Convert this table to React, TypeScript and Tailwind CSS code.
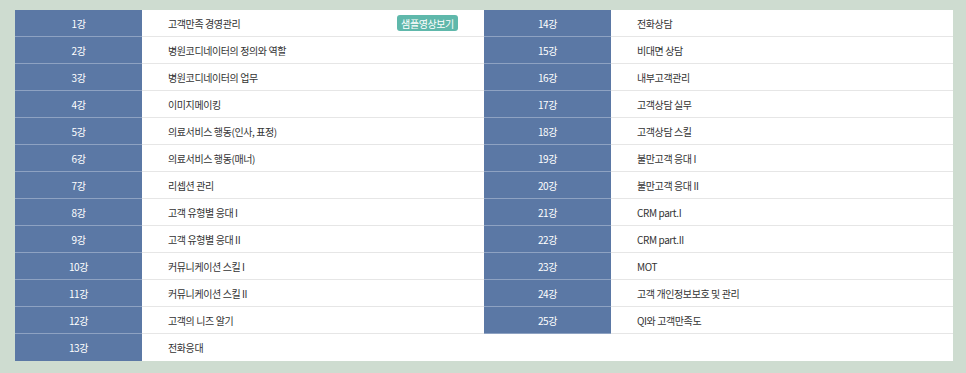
const left = [
  "고객만족 경영관리",
  "병원코디네이터의 정의와 역할",
  "병원코디네이터의 업무",
  "이미지메이킹",
  "의료서비스 행동(인사, 표정)",
  "의료서비스 행동(매너)",
  "리셉션 관리",
  "고객 유형별 응대 I",
  "고객 유형별 응대 II",
  "커뮤니케이션 스킬 I",
  "커뮤니케이션 스킬 II",
  "고객의 니즈 알기",
  "전화응대",
];

const right = [
  "전화상담",
  "비대면 상담",
  "내부고객관리",
  "고객상담 실무",
  "고객상담 스킬",
  "불만고객 응대 I",
  "불만고객 응대 II",
  "CRM part.I",
  "CRM part.II",
  "MOT",
  "고객 개인정보보호 및 관리",
  "QI와 고객만족도",
];

export default function App() {
  return (
    <div
      className="w-[966px] h-[373px] bg-[#cedcd0] pt-[10px] pl-[15px]"
      style={{ fontFamily: '"Noto Sans CJK KR", "Noto Sans", sans-serif' }}
    >
      <div className="w-[938px] flex flex-col bg-white text-[10px] tracking-[-0.4px]">
        {left.map((title, i) => {
          const r = right[i];
          const last = i === left.length - 1;
          return (
            <div key={i} className="flex h-[27px]">
              <div
                className={`w-[127px] flex items-center justify-center bg-[#5b78a5] text-white ${
                  last ? "" : "border-b border-[#8ea2c2]"
                }`}
              >
                {i + 1}강
              </div>
              <div
                className={`w-[342px] flex items-center justify-between pl-[26px] pr-[26px] text-[#333] ${
                  last ? "" : "border-b border-[#e6e6e6]"
                }`}
              >
                <span>{title}</span>
                {i === 0 && (
                  <span className="h-4 w-[61px] rounded-[3px] bg-[#5fb8ab] text-white text-[10px] flex items-center justify-center">
                    샘플영상보기
                  </span>
                )}
              </div>
              {r ? (
                <>
                  <div className="w-[127px] flex items-center justify-center bg-[#5b78a5] text-white border-b border-[#8ea2c2]">
                    {i + 14}강
                  </div>
                  <div className="w-[342px] flex items-center pl-[26px] text-[#333] border-b border-[#e6e6e6]">
                    {r}
                  </div>
                </>
              ) : (
                <div className="w-[469px]" />
              )}
            </div>
          );
        })}
      </div>
    </div>
  );
}
